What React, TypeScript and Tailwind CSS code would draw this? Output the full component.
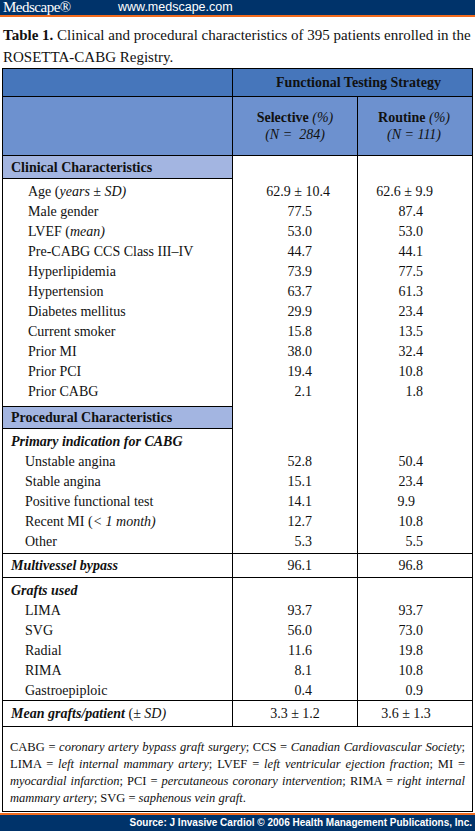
import React from 'react';

type Row = {
  label: React.ReactNode;
  a: string;
  b: string;
  aPad?: string;
  bPad?: string;
};

const serif = "font-['Liberation_Serif',serif]";

const clinical: Row[] = [
  { label: <>Age (<i>years ± SD)</i></>, a: '62.9 ± 10.4', b: '62.6 ± 9.9', aPad: 'pr-[27px]', bPad: 'pr-[39px]' },
  { label: 'Male gender', a: '77.5', b: '87.4' },
  { label: <>LVEF (<i>mean)</i></>, a: '53.0', b: '53.0' },
  { label: 'Pre-CABG CCS Class III–IV', a: '44.7', b: '44.1' },
  { label: 'Hyperlipidemia', a: '73.9', b: '77.5' },
  { label: 'Hypertension', a: '63.7', b: '61.3' },
  { label: 'Diabetes mellitus', a: '29.9', b: '23.4' },
  { label: 'Current smoker', a: '15.8', b: '13.5' },
  { label: 'Prior MI', a: '38.0', b: '32.4' },
  { label: 'Prior PCI', a: '19.4', b: '10.8' },
  { label: 'Prior CABG', a: '2.1', b: '1.8' },
];

const indication: Row[] = [
  { label: 'Unstable angina', a: '52.8', b: '50.4' },
  { label: 'Stable angina', a: '15.1', b: '23.4' },
  { label: 'Positive functional test', a: '14.1', b: '9.9', bPad: 'pr-[57px]' },
  { label: <>Recent MI (<i>&lt; 1 month)</i></>, a: '12.7', b: '10.8' },
  { label: 'Other', a: '5.3', b: '5.5' },
];

const grafts: Row[] = [
  { label: 'LIMA', a: '93.7', b: '93.7' },
  { label: 'SVG', a: '56.0', b: '73.0' },
  { label: 'Radial', a: '11.6', b: '19.8' },
  { label: 'RIMA', a: '8.1', b: '10.8' },
  { label: 'Gastroepiploic', a: '0.4', b: '0.9' },
];

const cols = 'grid grid-cols-[230px_125px_114px]';

function DataRow({ row, indent }: { row: Row; indent: string }) {
  return (
    <div className={`${cols} h-[20px] items-center`}>
      <div className={`border-r border-black ${indent} h-full flex items-center`}>{row.label}</div>
      <div className={`border-r border-black h-full flex items-center justify-end ${row.aPad ?? 'pr-[45px]'}`}>{row.a}</div>
      <div className={`h-full flex items-center justify-end ${row.bPad ?? 'pr-[49px]'}`}>{row.b}</div>
    </div>
  );
}

function Spacer({ h }: { h: string }) {
  return (
    <div className={`${cols} ${h}`}>
      <div className="border-r border-black" />
      <div className="border-r border-black" />
      <div />
    </div>
  );
}

function SectionBox({ title, h, top }: { title: string; h: string; top?: boolean }) {
  return (
    <div className={`${cols} ${h}`}>
      <div className={`border-r border-b border-black bg-[#a3b5e1] font-bold pl-[8px] flex items-center ${top ? 'border-t' : ''}`}>
        {title}
      </div>
      <div className="border-r border-black" />
      <div />
    </div>
  );
}

export default function App() {
  return (
    <div className="w-[475px] h-[831px] bg-white flex flex-col overflow-hidden text-[#111]">
      {/* top bar */}
      <div className="h-[15px] shrink-0 bg-[#00336a] flex items-center text-white">
        <span className={`${serif} text-[15px] leading-none tracking-[-0.5px] pl-[3px] w-[118px]`}>Medscape®</span>
        <span className="font-['Liberation_Sans',sans-serif] text-[12.5px] leading-none">www.medscape.com</span>
      </div>
      <div className="h-[2px] shrink-0 bg-[#f26b1d]" />

      <p className={`${serif} shrink-0 text-[15px] leading-[22px] pl-[3px] pt-[7px]`}>
        <b>Table 1.</b> Clinical and procedural characteristics of 395 patients enrolled in the
        <br />
        ROSETTA-CABG Registry.
      </p>

      <div className={`${serif} shrink-0 text-[14px] ml-[2px] w-[471px] border border-black`}>
        {/* header row 1 */}
        <div className={`${cols} h-[28px] bg-[#4676bb] border-b border-black`}>
          <div className="border-r border-black" />
          <div className="col-span-2 flex items-center justify-center font-bold pl-[12px]">
            Functional Testing Strategy
          </div>
        </div>
        {/* header row 2 */}
        <div className={`${cols} h-[58px] bg-[#6d91cf]`}>
          <div className="border-r border-black" />
          <div className="border-r border-black flex flex-col items-center justify-center leading-[17px]">
            <span><b>Selective</b> <i>(%)</i></span>
            <span><i>(N =&nbsp; 284)</i></span>
          </div>
          <div className="flex flex-col items-center justify-center leading-[17px] pr-[2px]">
            <span><b>Routine</b> <i>(%)</i></span>
            <span><i>(N = 111)</i></span>
          </div>
        </div>

        <div className="border-t border-black">
          <SectionBox title="Clinical Characteristics" h="h-[23px]" />
          <Spacer h="h-[2px]" />
          {clinical.map((r, i) => (
            <DataRow key={i} row={r} indent="pl-[25px]" />
          ))}
          <Spacer h="h-[5px]" />
          <SectionBox title="Procedural Characteristics" h="h-[21px]" top />
          <Spacer h="h-[4px]" />
          <div className={`${cols} h-[20px]`}>
            <div className="border-r border-black pl-[8px] flex items-center font-bold italic">
              Primary indication for CABG
            </div>
            <div className="border-r border-black" />
            <div />
          </div>
          {indication.map((r, i) => (
            <DataRow key={i} row={r} indent="pl-[22px]" />
          ))}
          <Spacer h="h-[2px]" />
        </div>

        {/* multivessel */}
        <div className={`${cols} h-[24px] border-t border-black`}>
          <div className="border-r border-black pl-[8px] flex items-center font-bold italic">Multivessel bypass</div>
          <div className="border-r border-black flex items-center justify-end pr-[45px]">96.1</div>
          <div className="flex items-center justify-end pr-[49px]">96.8</div>
        </div>

        {/* grafts */}
        <div className="border-t border-black">
          <Spacer h="h-[2px]" />
          <div className={`${cols} h-[20px]`}>
            <div className="border-r border-black pl-[8px] flex items-center font-bold italic">Grafts used</div>
            <div className="border-r border-black" />
            <div />
          </div>
          {grafts.map((r, i) => (
            <DataRow key={i} row={r} indent="pl-[22px]" />
          ))}
        </div>

        {/* mean grafts */}
        <div className={`${cols} h-[26px] border-t border-black`}>
          <div className="border-r border-black pl-[8px] flex items-center">
            <b><i>Mean grafts/patient</i></b>&nbsp;(<i>± SD)</i>
          </div>
          <div className="border-r border-black flex items-center justify-center">3.3 ± 1.2</div>
          <div className="flex items-center justify-center pr-[18px]">3.6 ± 1.3</div>
        </div>

        {/* footnote */}
        <div className="border-t border-black px-[7px] pt-[12px] pb-[4px] text-[12.5px] leading-[17px]">
          <div className="[text-align-last:justify]">
            CABG = <i>coronary artery bypass graft surgery</i>; CCS = <i>Canadian Cardiovascular Society</i>;
          </div>
          <div className="[text-align-last:justify]">
            LIMA = <i>left internal mammary artery</i>; LVEF = <i>left ventricular ejection fraction</i>; MI =
          </div>
          <div className="[text-align-last:justify]">
            <i>myocardial infarction</i>; PCI = <i>percutaneous coronary intervention</i>; RIMA = <i>right internal</i>
          </div>
          <div>
            <i>mammary artery</i>; SVG = <i>saphenous vein graft</i>.
          </div>
        </div>
      </div>

      <div className="flex-1" />
      <div className="h-[2px] shrink-0 bg-[#f26b1d]" />
      <div className="h-[16px] shrink-0 bg-[#00336a] flex items-center justify-end pr-[3px]">
        <span className="font-['Liberation_Sans',sans-serif] text-[10px] font-bold text-white leading-none">
          Source: J Invasive Cardiol © 2006 Health Management Publications, Inc.
        </span>
      </div>
    </div>
  );
}
